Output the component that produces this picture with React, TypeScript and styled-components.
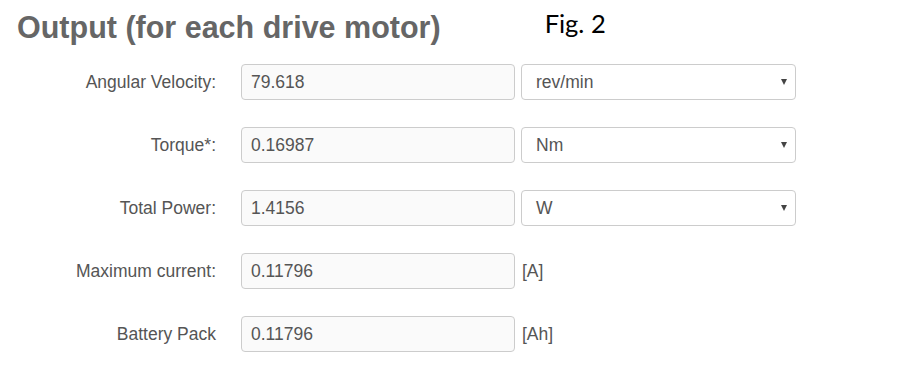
import React from "react";
import styled, { createGlobalStyle } from "styled-components";

const Global = createGlobalStyle`
  html, body { margin: 0; padding: 0; background: #fff; }
  body { font-family: "Liberation Sans", Arial, sans-serif; }
`;

const Page = styled.div`
  width: 905px;
  height: 385px;
  box-sizing: border-box;
  padding: 8px 0 0 17px;
`;

const Header = styled.div`
  display: flex;
  align-items: flex-start;
  height: 56px;
`;

const Title = styled.h2`
  margin: 0;
  font-family: "Liberation Sans", Arial, sans-serif;
  font-weight: 700;
  font-size: 30.5px;
  line-height: 38px;
  color: #666;
`;

const Fig = styled.div`
  margin-left: 104px;
  font-family: Lato, "Open Sans", sans-serif;
  font-size: 25.5px;
  line-height: 30px;
  color: #000;
`;

const Form = styled.div`
  display: flex;
  flex-direction: column;
  gap: 27px;
`;

const Row = styled.div`
  display: flex;
  align-items: center;
  height: 36px;
`;

const Label = styled.label`
  width: 199px;
  text-align: right;
  margin-right: 25px;
  font-size: 17.5px;
  color: #555;
`;

const Field = styled.div`
  box-sizing: border-box;
  width: 274px;
  height: 36px;
  padding: 0 9px;
  display: flex;
  align-items: center;
  border: 1px solid #ccc;
  border-radius: 4px;
  background: #fafafa;
  font-size: 17.5px;
  color: #555;
`;

const Select = styled.div`
  box-sizing: border-box;
  position: relative;
  width: 275px;
  height: 36px;
  margin-left: 6px;
  padding: 0 14px;
  display: flex;
  align-items: center;
  border: 1px solid #ccc;
  border-radius: 4px;
  background: #fff;
  font-size: 17.5px;
  color: #555;
`;

const Arrow = styled.span`
  position: absolute;
  right: 8px;
  top: 14px;
  width: 0;
  height: 0;
  border-left: 3.5px solid transparent;
  border-right: 3.5px solid transparent;
  border-top: 6px solid #444;
`;

const Unit = styled.span`
  margin-left: 7px;
  font-size: 17.5px;
  color: #555;
`;

type RowData = { label: string; value: string; select?: string; unit?: string };

const rows: RowData[] = [
  { label: "Angular Velocity:", value: "79.618", select: "rev/min" },
  { label: "Torque*:", value: "0.16987", select: "Nm" },
  { label: "Total Power:", value: "1.4156", select: "W" },
  { label: "Maximum current:", value: "0.11796", unit: "[A]" },
  { label: "Battery Pack", value: "0.11796", unit: "[Ah]" },
];

export default function App() {
  return (
    <Page>
      <Global />
      <Header>
        <Title>Output (for each drive motor)</Title>
        <Fig>Fig. 2</Fig>
      </Header>
      <Form>
        {rows.map((r) => (
          <Row key={r.label}>
            <Label>{r.label}</Label>
            <Field>{r.value}</Field>
            {r.select ? (
              <Select>
                {r.select}
                <Arrow />
              </Select>
            ) : (
              <Unit>{r.unit}</Unit>
            )}
          </Row>
        ))}
      </Form>
    </Page>
  );
}
